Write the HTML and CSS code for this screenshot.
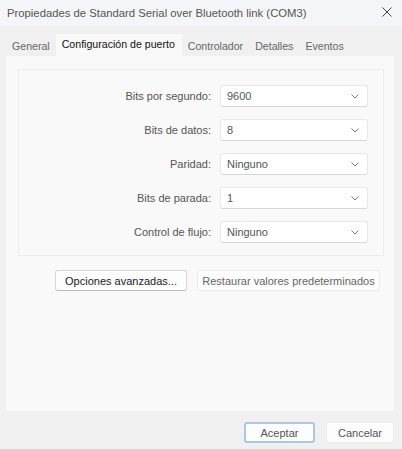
FILE: index.html
```html
<!DOCTYPE html>
<html lang="es">
<head>
    <meta charset="UTF-8">
    <title>Propiedades de Standard Serial over Bluetooth link (COM3)</title>
    <link rel="stylesheet" href="styles.css">
</head>
<body>
    <div class="window">
        <div class="titlebar">
            <span class="title-text">Propiedades de Standard Serial over Bluetooth link (COM3)</span>
            <span class="close-btn">
                <svg width="10" height="10" viewBox="0 0 10 10"><path d="M0.5 0.5 L9.5 9.5 M9.5 0.5 L0.5 9.5" stroke="#444" stroke-width="1"/></svg>
            </span>
        </div>
        <div class="tabs">
            <div class="tab">General</div>
            <div class="tab tab-active">Configuración de puerto</div>
            <div class="tab">Controlador</div>
            <div class="tab">Detalles</div>
            <div class="tab">Eventos</div>
        </div>
        <div class="panel">
            <div class="group">
                <label class="field-label">Bits por segundo:</label>
                <div class="combo"><span>9600</span><svg class="chevron" width="8" height="5" viewBox="0 0 8 5"><path d="M0.5 0.5 L4 4 L7.5 0.5" fill="none" stroke="#777" stroke-width="1"/></svg></div>
                <label class="field-label">Bits de datos:</label>
                <div class="combo"><span>8</span><svg class="chevron" width="8" height="5" viewBox="0 0 8 5"><path d="M0.5 0.5 L4 4 L7.5 0.5" fill="none" stroke="#777" stroke-width="1"/></svg></div>
                <label class="field-label">Paridad:</label>
                <div class="combo"><span>Ninguno</span><svg class="chevron" width="8" height="5" viewBox="0 0 8 5"><path d="M0.5 0.5 L4 4 L7.5 0.5" fill="none" stroke="#777" stroke-width="1"/></svg></div>
                <label class="field-label">Bits de parada:</label>
                <div class="combo"><span>1</span><svg class="chevron" width="8" height="5" viewBox="0 0 8 5"><path d="M0.5 0.5 L4 4 L7.5 0.5" fill="none" stroke="#777" stroke-width="1"/></svg></div>
                <label class="field-label">Control de flujo:</label>
                <div class="combo"><span>Ninguno</span><svg class="chevron" width="8" height="5" viewBox="0 0 8 5"><path d="M0.5 0.5 L4 4 L7.5 0.5" fill="none" stroke="#777" stroke-width="1"/></svg></div>
            </div>
            <div class="panel-buttons">
                <button class="win-button btn-advanced">Opciones avanzadas...</button>
                <button class="win-button btn-restore">Restaurar valores predeterminados</button>
            </div>
        </div>
        <div class="footer">
            <button class="win-button btn-ok">Aceptar</button>
            <button class="win-button btn-cancel">Cancelar</button>
        </div>
    </div>
</body>
</html>
```

FILE: styles.css
```css
body {
    margin: 0;
    padding: 0;
    background-color: #f0f0f0;
    font-family: "Liberation Sans", Arial, sans-serif;
    font-size: 11px;
    color: #1b1b1b;
}
.window {
    width: 402px;
    height: 449px;
    display: flex;
    flex-direction: column;
}
.titlebar {
    height: 26px;
    padding: 0 10px 0 7px;
    display: flex;
    align-items: center;
    justify-content: space-between;
    background-color: #f3f5f8;
    color: #555;
    font-size: 11.3px;
    white-space: nowrap;
}
.close-btn {
    display: flex;
    align-items: center;
    margin-top: -2px;
}
.tabs {
    display: flex;
    align-items: flex-end;
    padding-left: 6px;
    margin-top: 9px;
    height: 21px;
    white-space: nowrap;
    font-size: 10.6px;
}
.tab {
    padding: 0 6px;
    height: 19px;
    line-height: 19px;
    color: #666;
}
.tab-active {
    height: 22px;
    line-height: 21px;
    padding: 0 7px 0 6px;
    background-color: #f9f9f9;
    color: #111;
}
.panel {
    margin: 0 8px 0 6px;
    height: 355px;
    background-color: #f9f9f9;
    padding: 13px 10px 0 12px;
    box-sizing: border-box;
}
.group {
    height: 187px;
    border: 1px solid #ededed;
    box-sizing: border-box;
    padding: 15px 15px 0 0;
    display: grid;
    grid-template-columns: 1fr 148px;
    grid-auto-rows: 22px;
    column-gap: 9px;
    row-gap: 12px;
    align-items: center;
}
.field-label {
    text-align: right;
    color: #555;
}
.combo {
    height: 22px;
    box-sizing: border-box;
    border: 1px solid #e8e8e8;
    border-bottom-color: #d8d8d8;
    border-radius: 3px;
    background-color: #ffffff;
    display: flex;
    align-items: center;
    justify-content: space-between;
    padding: 0 8px 0 6px;
    color: #555;
}
.panel-buttons {
    display: flex;
    gap: 10px;
    margin-top: 14px;
    padding-left: 37px;
}
.win-button {
    font-family: inherit;
    font-size: 11px;
    color: #1b1b1b;
    background-color: #fdfdfd;
    border: 1px solid #d6d6d6;
    border-bottom-color: #bcbcbc;
    border-radius: 3px;
    height: 21px;
    padding: 0;
    white-space: nowrap;
}
.btn-advanced {
    width: 132px;
}
.btn-restore {
    width: 183px;
    color: #666;
    border-color: #ebebeb;
}
.footer {
    display: flex;
    justify-content: flex-end;
    gap: 11px;
    padding: 11px 8px 0 0;
}
.btn-ok {
    width: 71px;
    border: 2px solid #a9c8e6;
    color: #555;
}
.btn-cancel {
    width: 68px;
    color: #555;
    border-color: #ebebeb;
}
```
